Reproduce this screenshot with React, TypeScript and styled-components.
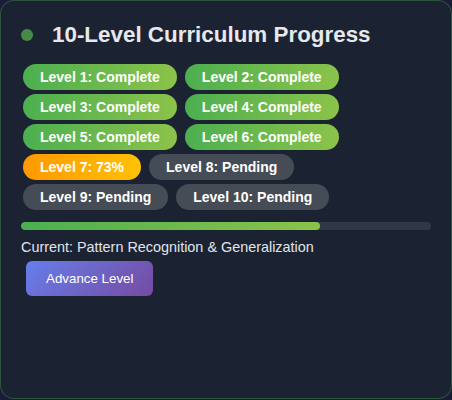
import React from "react";
import styled, { createGlobalStyle } from "styled-components";

const Global = createGlobalStyle`
  html, body { margin: 0; padding: 0; background: #1b1a38; }
  body { font-family: "Liberation Sans", Arial, sans-serif; }
  * { box-sizing: border-box; }
`;

const Card = styled.div`
  width: 452px;
  height: 399px;
  background: #1b2332;
  border: 1px solid rgba(76, 175, 80, 0.35);
  border-radius: 14px;
  padding: 20px;
  color: #e0e0e0;
`;

const Header = styled.div`
  display: flex;
  align-items: center;
  gap: 19px;
  height: 27px;
  margin-bottom: 16px;
`;

const Dot = styled.span`
  width: 12px;
  height: 12px;
  border-radius: 50%;
  background: #468a49;
  flex: none;
`;

const Title = styled.h3`
  margin: 0;
  font-size: 22.4px;
  font-weight: 700;
  color: #e6e8ec;
  line-height: 27px;
`;

const Badges = styled.div`
  display: flex;
  flex-wrap: wrap;
  gap: 4px 8px;
  padding-left: 2px;
  width: 340px;
`;

type Status = "complete" | "active" | "pending";

const Badge = styled.span<{ $status: Status }>`
  display: inline-block;
  padding: 5px 17px;
  font-size: 14px;
  line-height: 16px;
  font-weight: 700;
  color: #fff;
  border-radius: 13px;
  white-space: nowrap;
  background: ${(p) =>
    p.$status === "complete"
      ? "linear-gradient(90deg, #4caf50, #8bc34a)"
      : p.$status === "active"
      ? "linear-gradient(90deg, #ff9800, #ffc107)"
      : "#464c56"};
`;

const Track = styled.div`
  margin-top: 12px;
  height: 8px;
  border-radius: 4px;
  background: #313845;
  overflow: hidden;
`;

const Fill = styled.div`
  height: 100%;
  border-radius: 4px;
  background: linear-gradient(90deg, #4caf50, #8bc34a);
`;

const Current = styled.div`
  margin-top: 9px;
  font-size: 14.4px;
  line-height: 17px;
  color: #e0e4ea;
`;

const Button = styled.button`
  margin: 5px;
  padding: 10px 20px;
  border: none;
  border-radius: 6px;
  background: linear-gradient(135deg, #667eea, #764ba2);
  color: #fff;
  font-family: "Liberation Sans", Arial, sans-serif;
  font-size: 13.33px;
  line-height: 15px;
  cursor: pointer;
`;

const levels: { label: string; status: Status }[] = [
  { label: "Level 1: Complete", status: "complete" },
  { label: "Level 2: Complete", status: "complete" },
  { label: "Level 3: Complete", status: "complete" },
  { label: "Level 4: Complete", status: "complete" },
  { label: "Level 5: Complete", status: "complete" },
  { label: "Level 6: Complete", status: "complete" },
  { label: "Level 7: 73%", status: "active" },
  { label: "Level 8: Pending", status: "pending" },
  { label: "Level 9: Pending", status: "pending" },
  { label: "Level 10: Pending", status: "pending" },
];

export default function App() {
  const progress = 73;
  return (
    <>
      <Global />
      <Card>
        <Header>
          <Dot />
          <Title>10-Level Curriculum Progress</Title>
        </Header>
        <Badges>
          {levels.map((l) => (
            <Badge key={l.label} $status={l.status}>
              {l.label}
            </Badge>
          ))}
        </Badges>
        <Track>
          <Fill style={{ width: `${progress}%` }} />
        </Track>
        <Current>Current: Pattern Recognition &amp; Generalization</Current>
        <Button>Advance Level</Button>
      </Card>
    </>
  );
}
